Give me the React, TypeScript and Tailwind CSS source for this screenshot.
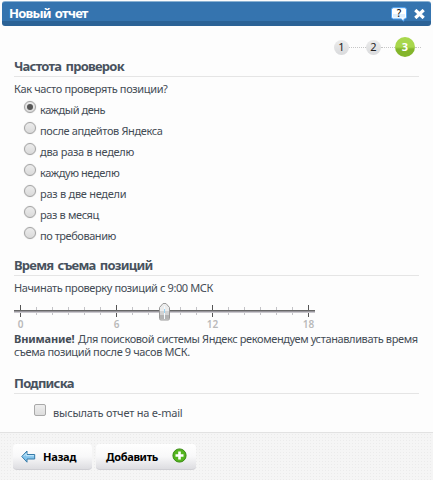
import clsx from 'clsx';

const frequencies = [
  { label: 'каждый день', tracking: 'tracking-[-0.45px]' },
  { label: 'после апдейтов Яндекса', tracking: 'tracking-[-0.37px]' },
  { label: 'два раза в неделю', tracking: 'tracking-[-0.28px]' },
  { label: 'каждую неделю', tracking: 'tracking-[-0.4px]' },
  { label: 'раз в две недели', tracking: 'tracking-[-0.27px]' },
  { label: 'раз в месяц', tracking: 'tracking-[-0.37px]' },
  { label: 'по требованию', tracking: 'tracking-[-0.45px]' },
];

const hours = Array.from({ length: 19 }, (_, i) => i);

function Heading({ children }: { children: string }) {
  return (
    <h2 className="h-5 border-b border-[#e5e5e5] text-[13px] leading-[18px] font-bold tracking-[-0.75px] whitespace-nowrap text-[#48525e] [word-spacing:1.5px]">
      {children}
    </h2>
  );
}

function Radio({ checked }: { checked: boolean }) {
  return (
    <span className="flex size-3 shrink-0 items-center justify-center rounded-full border border-[#a3a3a3] bg-linear-to-b from-[#ececec] to-[#dadada] shadow-[0_0_1px_#bbb]">
      {checked && <span className="size-1.5 rounded-full bg-[#555]" />}
    </span>
  );
}

function Header() {
  return (
    <header className="mx-0.5 mt-px flex h-[25px] items-center rounded-[3px] border-t border-[#8bb2d3] bg-linear-to-b from-[#3574af] from-78% to-[#2b6296] to-78% pr-1.5 pl-[7px]">
      <h1 className="-mt-0.5 grow text-[13px] leading-[18px] font-bold tracking-[-0.8px] text-white [word-spacing:1.5px]">Новый отчет</h1>
      <svg width="17" height="15" viewBox="0 0 17 15" className="mr-1.5">
        <path d="M2.5.7h11q2 0 2 2v7.2q0 2-2 2h-.7v2.3l-2.4-2.3H2.5q-2 0-2-2V2.7q0-2 2-2Z" fill="#fff" stroke="#4da3f5" />
        <path d="M2 7h12v3.5H2Z" fill="#dcefff" />
        <path d="M10.2 11.3h2.2v2Z" fill="#fff" />
        <text x="8" y="10" textAnchor="middle" fontSize="10" fontWeight="500" fill="#111">?</text>
      </svg>
      <svg width="11" height="10" viewBox="0 0 11 10">
        <path d="M1.3 1 9.7 9M9.7 1 1.3 9" stroke="#fff" strokeWidth="3.2" />
      </svg>
    </header>
  );
}

function Steps() {
  return (
    <div className="mt-[11px] -mr-[2px] flex h-5 items-center justify-end text-[11px]">
      <span className="flex size-[15px] items-center justify-center rounded-full bg-linear-to-b from-[#ececec] to-[#d9dadc] pb-0.5 text-[#222]">1</span>
      <span className="w-[17px] border-t border-dotted border-[#c6c6c6]" />
      <span className="flex size-[15px] items-center justify-center rounded-full bg-linear-to-b from-[#ececec] to-[#d9dadc] pb-0.5 text-[#222]">2</span>
      <span className="w-[14px] border-t border-dotted border-[#c6c6c6]" />
      <span className="flex size-5 items-center justify-center rounded-full bg-linear-to-b from-[#a8d74c] from-50% to-[#83b52b] to-60% pb-0.5 font-bold text-white">3</span>
      <span className="w-1.5 border-t border-dotted border-[#c6c6c6]" />
    </div>
  );
}

function Slider() {
  return (
    <svg width="301" height="30" viewBox="0 0 301 30" className="block">
      {hours.map((h) => (
        <path
          key={h}
          d={h % 6 === 0 ? `M${h * 16 + 6.5} 4V16` : `M${h * 16 + 6.5} 6V14`}
          stroke={h % 6 === 0 ? '#555' : '#c3c3c7'}
        />
      ))}
      <path d="M0 9.5H301" stroke="#666" />
      <path d="M0 10.5H301" stroke="#99979d" />
      <path d="M0 11.5H301" stroke="#c9c7cd" />
      {hours.filter((h) => h % 6 === 0).map((h) => (
        <text key={h} x={h * 16 + 6.5} y="27" textAnchor="middle" fontSize="10" fontWeight="600" fill="#b9b9b9">
          {h}
        </text>
      ))}
      <path d="M145.5 6.5 149 2.5H152L155.5 6.5V17.5Q155.5 19 154 19H147Q145.5 19 145.5 17.5Z" fill="#ececec" stroke="#999" />
      <path d="M146 10H155V14H146Z" fill="#d2d2d2" />
      <path d="M146 14H155V18.5H146Z" fill="#b3b3b3" />
      <path d="M150.5 5V18" stroke="#f5fbff" />
      <path d="M150.5 8V12" stroke="#9bd4f4" />
    </svg>
  );
}

function Footer() {
  return (
    <footer className="flex h-12 gap-1 border-t border-[#e2e2e2] bg-[#f5f5f5] bg-[radial-gradient(#ebebeb_0.7px,transparent_0.8px)] bg-size-[3px_3px] pt-[11px] pl-[13px] text-[11px] font-bold tracking-[-0.2px] text-black">
      <button className="flex h-[26px] w-[79px] items-center rounded-[4px] border-b border-[#cfcfd4] bg-linear-to-b from-white via-[#f8f8f9] to-[#dddde1] pl-2">
        <svg width="16" height="14" viewBox="0 0 16 14" className="mr-[6px]">
          <path d="M.8 6.5 6 1V4.5H13.7V9H6V12.2Z" fill="#83c4ec" stroke="#367aa8" strokeLinejoin="round" />
          <path d="M2.5 6.2 5.2 3.5V5.7H13" fill="none" stroke="#c9eafb" />
        </svg>
        Назад
      </button>
      <button className="flex h-[26px] w-[100px] items-center rounded-[4px] border-b border-[#cfcfd4] bg-linear-to-b from-white via-[#f8f8f9] to-[#dddde1] pl-[10px]">
        <span className="w-[66px] text-left tracking-[-0.35px]">Добавить</span>
        <svg width="15" height="15" viewBox="0 0 15 15" className="-mt-0.5">
          <circle cx="7.5" cy="7.5" r="6.6" fill="#54b51e" stroke="#3c8c16" />
          <path d="M3.5 7.5H11.5M7.5 3.5V11.5" stroke="#fff" strokeWidth="2.6" />
        </svg>
      </button>
    </footer>
  );
}

export default function App() {
  return (
    <div className="flex h-[480px] w-[433px] flex-col overflow-hidden bg-[#fdfdfd] font-['Noto_Sans','Open_Sans',sans-serif] text-[11px] leading-[13px] text-[#444c55]">
      <Header />
      <main className="h-[406px] shrink-0 pr-[14px] pl-[14px]">
        <Steps />
        <section className="h-[199px]">
          <Heading>Частота проверок</Heading>
          <p className="mt-[5px] mb-[6px] tracking-[-0.36px]">Как часто проверять позиции?</p>
          {frequencies.map(({ label, tracking }, i) => (
            <label key={label} className="flex h-[21px] pl-2.5">
              <Radio checked={i === 0} />
              <span className={clsx('mt-[2px] ml-1', tracking)}>{label}</span>
            </label>
          ))}
        </section>
        <section className="h-[118px]">
          <Heading>Время съема позиций</Heading>
          <p className="mt-[5px] mb-[7px] tracking-[-0.39px]">Начинать проверку позиций с 9:00 МСК</p>
          <Slider />
          <p className="mt-[1px] tracking-[-0.38px] whitespace-nowrap">
            <b className="mr-px tracking-[-0.15px]">Внимание!</b> Для поисковой системы Яндекс рекомендуем устанавливать время
            <br />
            съема позиций после 9 часов МСК.
          </p>
        </section>
        <section>
          <Heading>Подписка</Heading>
          <label className="mt-[10px] flex pl-5">
            <span className="size-3 rounded-[2px] border border-[#a9a9a9] bg-linear-to-b from-[#eee] to-[#ddd]" />
            <span className="mt-[2px] ml-[7px] tracking-[-0.2px]">высылать отчет на e-mail</span>
          </label>
        </section>
      </main>
      <Footer />
    </div>
  );
}
